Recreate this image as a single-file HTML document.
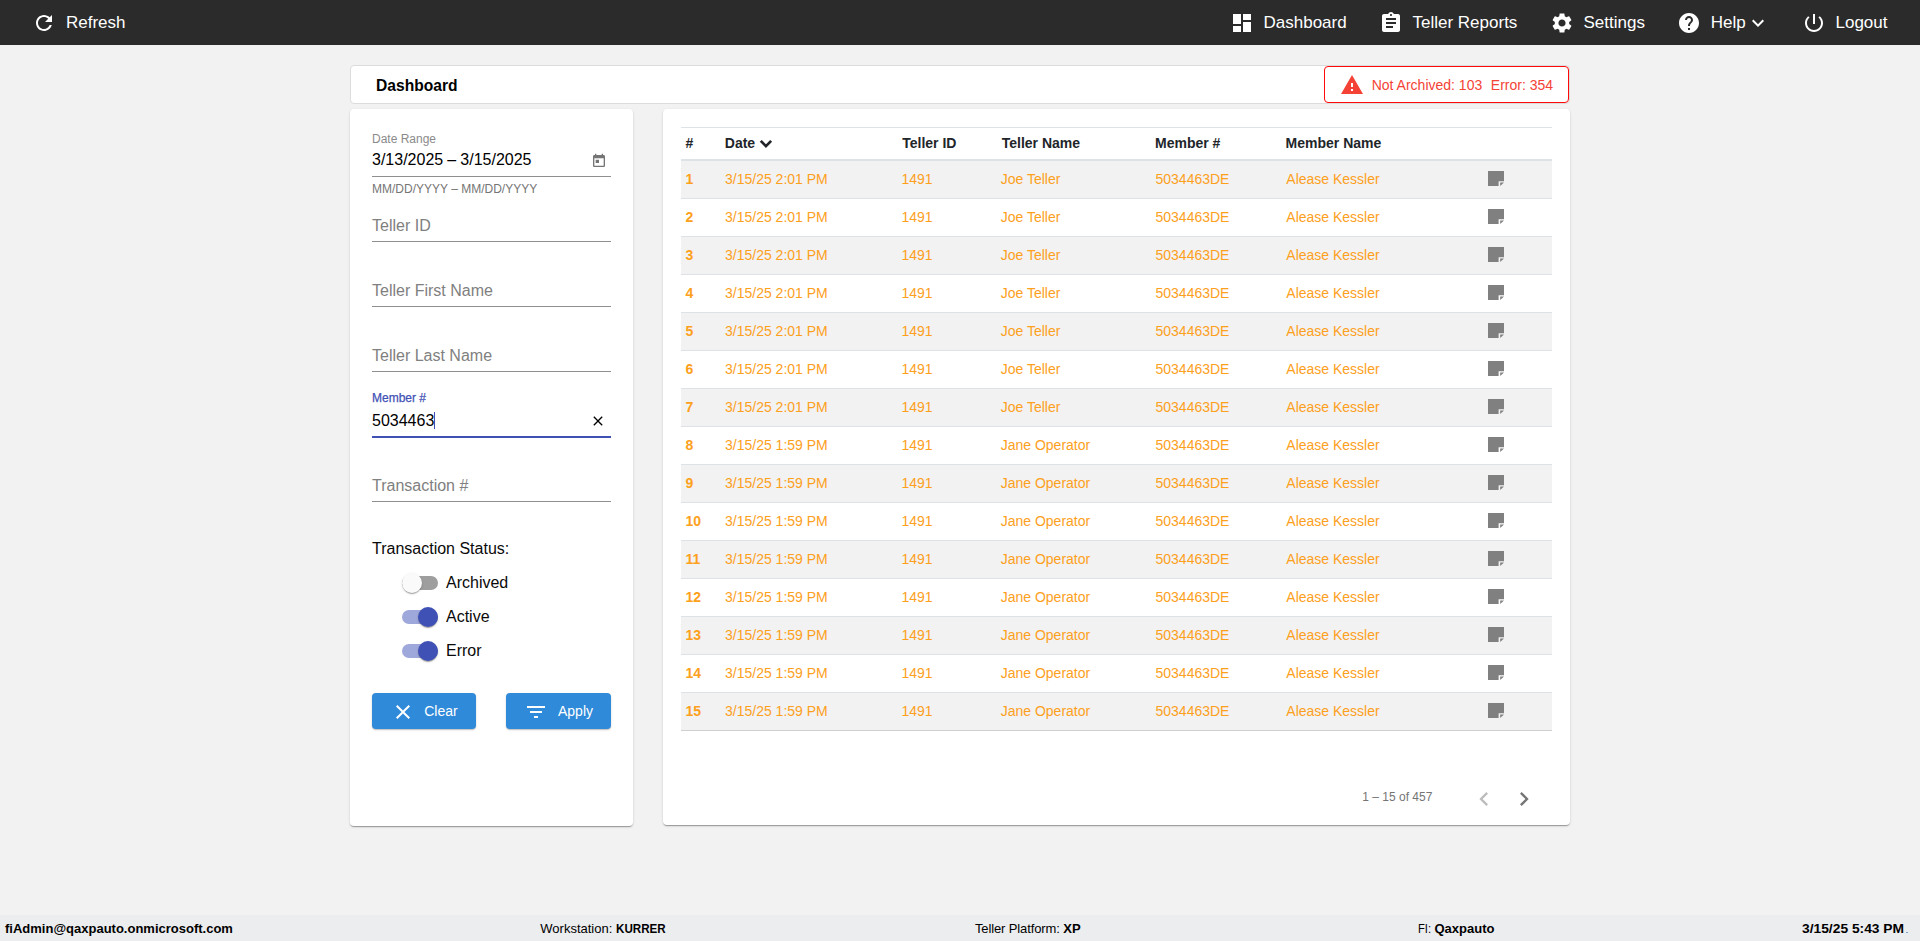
<!DOCTYPE html>
<html lang="en"><head><meta charset="utf-8"><title>Dashboard</title>
<style>
*{box-sizing:border-box;margin:0;padding:0}
html,body{width:1920px;height:941px;overflow:hidden}
body{background:#f2f2f2;font-family:"Liberation Sans",Arial,Helvetica,sans-serif;position:relative;color:#000}
.t{position:absolute;white-space:pre}
.ic{position:absolute;display:block}
.abs{position:absolute}
#nav{position:absolute;left:0;top:0;width:1920px;height:45px;background:#2b2b2b}
#titlebar{position:absolute;left:350px;top:65px;width:1220px;height:39px;background:#fff;border:1px solid #dcdcdc;border-radius:4px}
#alert{position:absolute;left:1324px;top:66px;width:245px;height:37px;border:1px solid #ff0a0a;border-radius:4px;background:#fff}
.card{position:absolute;background:#fff;border-radius:4px;box-shadow:0 2px 1px -1px rgba(0,0,0,.2),0 1px 1px 0 rgba(0,0,0,.14),0 1px 3px 0 rgba(0,0,0,.12)}
.ul{position:absolute;left:372px;width:239px;height:1px;background:#8f8f8f}
.track{position:absolute;left:402px;width:36px;height:14px;border-radius:8px}
.thumb{position:absolute;width:20px;height:20px;border-radius:50%;box-shadow:0 2px 1px -1px rgba(0,0,0,.2),0 1px 1px 0 rgba(0,0,0,.14),0 1px 3px 0 rgba(0,0,0,.12)}
.btn{position:absolute;top:693px;height:36px;background:#2f8ad9;border-radius:4px;box-shadow:0 1px 1px 0 rgba(0,0,0,.18),0 1px 3px 0 rgba(0,0,0,.10)}
.row{position:absolute;left:681px;width:871px;height:38px;border-bottom:1px solid #dee2e6}
.row.odd{background:#f2f2f2}
.c{color:#fda01c}
#footer{position:absolute;left:0;top:915px;width:1920px;height:26px;background:#ecedef}
</style></head><body>

<div id="nav">
<svg class="ic" style="left:32px;top:10.8px;width:24px;height:24px;" viewBox="0 0 24 24"><path fill="#fff" d="M17.65 6.35C16.2 4.9 14.21 4 12 4c-4.42 0-7.99 3.58-7.99 8s3.57 8 7.99 8c3.73 0 6.84-2.55 7.73-6h-2.08c-.82 2.33-3.04 4-5.65 4-3.31 0-6-2.69-6-6s2.69-6 6-6c1.66 0 3.14.69 4.22 1.78L13 11h7V4l-2.35 2.35z"/></svg>
<div class="t" style="left:66px;top:13.00px;font-size:17px;line-height:19px;color:#fff;">Refresh</div>
<svg class="ic" style="left:1229.5px;top:10.8px;width:24px;height:24px;" viewBox="0 0 24 24"><path fill="#fff" d="M3 13h8V3H3v10zm0 8h8v-6H3v6zm10 0h8V11h-8v10zm0-18v6h8V3h-8z"/></svg>
<div class="t" style="left:1263.5px;top:13.00px;font-size:17px;line-height:19px;color:#fff;">Dashboard</div>
<svg class="ic" style="left:1378.5px;top:10.8px;width:24px;height:24px;" viewBox="0 0 24 24"><path fill="#fff" d="M19 3h-4.18C14.4 1.84 13.3 1 12 1c-1.3 0-2.4.84-2.82 2H5c-1.1 0-2 .9-2 2v14c0 1.1.9 2 2 2h14c1.1 0 2-.9 2-2V5c0-1.1-.9-2-2-2zm-7 0c.55 0 1 .45 1 1s-.45 1-1 1-1-.45-1-1 .45-1 1-1zm2 14H7v-2h7v2zm3-4H7v-2h10v2zm0-4H7V7h10v2z"/></svg>
<div class="t" style="left:1412.5px;top:13.00px;font-size:17px;line-height:19px;color:#fff;">Teller Reports</div>
<svg class="ic" style="left:1549.5px;top:10.8px;width:24px;height:24px;" viewBox="0 0 24 24"><path fill="#fff" d="M19.14,12.94c0.04-0.3,0.06-0.61,0.06-0.94c0-0.32-0.02-0.64-0.07-0.94l2.03-1.58c0.18-0.14,0.23-0.41,0.12-0.61 l-1.92-3.32c-0.12-0.22-0.37-0.29-0.59-0.22l-2.39,0.96c-0.5-0.38-1.03-0.7-1.62-0.94L14.4,2.81c-0.04-0.24-0.24-0.41-0.48-0.41 h-3.84c-0.24,0-0.43,0.17-0.47,0.41L9.25,5.35C8.66,5.59,8.12,5.92,7.63,6.29L5.24,5.33c-0.22-0.08-0.47,0-0.59,0.22L2.74,8.87 C2.62,9.08,2.66,9.34,2.86,9.48l2.03,1.58C4.84,11.36,4.8,11.69,4.8,12s0.02,0.64,0.07,0.94l-2.03,1.58 c-0.18,0.14-0.23,0.41-0.12,0.61l1.92,3.32c0.12,0.22,0.37,0.29,0.59,0.22l2.39-0.96c0.5,0.38,1.03,0.7,1.62,0.94l0.36,2.54 c0.05,0.24,0.24,0.41,0.48,0.41h3.84c0.24,0,0.44-0.17,0.47-0.41l0.36-2.54c0.59-0.24,1.13-0.56,1.62-0.94l2.39,0.96 c0.22,0.08,0.47,0,0.59-0.22l1.92-3.32c0.12-0.22,0.07-0.47-0.12-0.61L19.14,12.94z M12,15.6c-1.98,0-3.6-1.62-3.6-3.6 s1.62-3.6,3.6-3.6s3.6,1.62,3.6,3.6S13.98,15.6,12,15.6z"/></svg>
<div class="t" style="left:1583.5px;top:13.00px;font-size:17px;line-height:19px;color:#fff;">Settings</div>
<svg class="ic" style="left:1676.7px;top:10.8px;width:24px;height:24px;" viewBox="0 0 24 24"><path fill="#fff" d="M12 2C6.48 2 2 6.48 2 12s4.48 10 10 10 10-4.48 10-10S17.52 2 12 2zm1 17h-2v-2h2v2zm2.07-7.75l-.9.92C13.45 12.9 13 13.5 13 15h-2v-.5c0-1.1.45-2.1 1.17-2.83l1.24-1.26c.37-.36.59-.86.59-1.41 0-1.1-.9-2-2-2s-2 .9-2 2H8c0-2.21 1.79-4 4-4s4 1.79 4 4c0 .88-.36 1.68-.93 2.25z"/></svg>
<div class="t" style="left:1710.7px;top:13.00px;font-size:17px;line-height:19px;color:#fff;">Help</div>
<svg class="ic" style="left:1746px;top:10.8px;width:24px;height:24px;" viewBox="0 0 24 24"><path fill="#fff" d="M16.59 8.59L12 13.17 7.41 8.59 6 10l6 6 6-6z"/></svg>
<svg class="ic" style="left:1801.7px;top:10.8px;width:24px;height:24px;" viewBox="0 0 24 24"><path fill="#fff" d="M13 3h-2v10h2V3zm4.83 2.17l-1.42 1.42C17.99 7.86 19 9.81 19 12c0 3.87-3.13 7-7 7s-7-3.13-7-7c0-2.19 1.01-4.14 2.58-5.42L6.17 5.17C4.23 6.82 3 9.26 3 12c0 4.97 4.03 9 9 9s9-4.03 9-9c0-2.74-1.23-5.18-3.17-6.83z"/></svg>
<div class="t" style="left:1835.5px;top:13.00px;font-size:17px;line-height:19px;color:#fff;">Logout</div>
</div>
<div id="titlebar"></div>
<div class="t" style="left:376.1px;top:77.00px;font-size:15.6px;line-height:17px;color:#000;font-weight:700;">Dashboard</div>
<div id="alert"></div>
<svg class="ic" style="left:1340.4px;top:73.1px;width:24px;height:24px;" viewBox="0 0 24 24"><path fill="#f44336" d="M1 21h22L12 2 1 21zm12-3h-2v-2h2v2zm0-4h-2v-4h2v4z"/></svg>
<div class="t" style="left:1371.7px;top:77.00px;font-size:14px;line-height:16px;color:#f44336;">Not Archived: 103</div>
<div class="t" style="left:1490.8px;top:77.00px;font-size:14px;line-height:16px;color:#f44336;">Error: 354</div>
<div class="card" style="left:350px;top:109px;width:283px;height:717px"></div>
<div class="t" style="left:372px;top:132.00px;font-size:12px;line-height:14px;color:#8a8a8a;">Date Range</div>
<div class="t" style="left:372px;top:151.00px;font-size:16px;line-height:17px;color:#000;">3/13/2025</div>
<div class="t" style="left:447.2px;top:151.00px;font-size:16px;line-height:17px;color:#000;">–</div>
<div class="t" style="left:460.3px;top:151.00px;font-size:16px;line-height:17px;color:#000;">3/15/2025</div>
<svg class="ic" style="left:591.1px;top:153.1px;width:16px;height:16px;" viewBox="0 0 24 24"><path fill="#757575" d="M19 3h-1V1h-2v2H8V1H6v2H5c-1.11 0-1.99.9-1.99 2L3 19c0 1.1.89 2 2 2h14c1.1 0 2-.9 2-2V5c0-1.1-.9-2-2-2zm0 16H5V8h14v11zM7 10h5v5H7z"/></svg>
<div class="ul" style="top:176px"></div>
<div class="t" style="left:372px;top:182.00px;font-size:12px;line-height:14px;color:#757575;">MM/DD/YYYY – MM/DD/YYYY</div>
<div class="t" style="left:372px;top:217.00px;font-size:16px;line-height:17px;color:#808080;">Teller ID</div>
<div class="ul" style="top:241px"></div>
<div class="t" style="left:372px;top:282.00px;font-size:16px;line-height:17px;color:#808080;">Teller First Name</div>
<div class="ul" style="top:306px"></div>
<div class="t" style="left:372px;top:347.00px;font-size:16px;line-height:17px;color:#808080;">Teller Last Name</div>
<div class="ul" style="top:371px"></div>
<div class="t" style="left:372px;top:391.00px;font-size:12px;line-height:14px;color:#3f51b5;-webkit-text-stroke:.25px #3f51b5;">Member #</div>
<div class="t" style="left:372px;top:412.00px;font-size:16px;line-height:17px;color:#000;">5034463</div>
<div class="abs" style="left:434px;top:412px;width:1px;height:17px;background:#3f51b5"></div>
<svg class="ic" style="left:590.1px;top:413px;width:16px;height:16px;" viewBox="0 0 24 24"><path fill="#000" d="M19 6.41L17.59 5 12 10.59 6.41 5 5 6.41 10.59 12 5 17.59 6.41 19 12 13.41 17.59 19 19 17.59 13.41 12z"/></svg>
<div class="ul" style="top:436px;height:2px;background:#3f51b5"></div>
<div class="t" style="left:372px;top:477.00px;font-size:16px;line-height:17px;color:#808080;">Transaction #</div>
<div class="ul" style="top:501px"></div>
<div class="t" style="left:372px;top:540.00px;font-size:16px;line-height:17px;color:#0a0a0a;">Transaction Status:</div>
<div class="track" style="top:576px;background:#9e9e9e"></div>
<div class="thumb" style="left:402px;top:573px;background:#fafafa"></div>
<div class="t" style="left:446px;top:574.00px;font-size:16px;line-height:17px;color:#0a0a0a;">Archived</div>
<div class="track" style="top:610px;background:#9fa8da"></div>
<div class="thumb" style="left:418px;top:607px;background:#3f51b5"></div>
<div class="t" style="left:446px;top:608.00px;font-size:16px;line-height:17px;color:#0a0a0a;">Active</div>
<div class="track" style="top:644px;background:#9fa8da"></div>
<div class="thumb" style="left:418px;top:641px;background:#3f51b5"></div>
<div class="t" style="left:446px;top:642.00px;font-size:16px;line-height:17px;color:#0a0a0a;">Error</div>
<div class="btn" style="left:372px;width:104px"></div>
<svg class="ic" style="left:390.7px;top:700px;width:24px;height:24px;" viewBox="0 0 24 24"><path fill="#fff" d="M19 6.41L17.59 5 12 10.59 6.41 5 5 6.41 10.59 12 5 17.59 6.41 19 12 13.41 17.59 19 19 17.59 13.41 12z"/></svg>
<div class="t" style="left:424.2px;top:703.00px;font-size:14px;line-height:16px;color:#fff;">Clear</div>
<div class="btn" style="left:506px;width:105px"></div>
<svg class="ic" style="left:524px;top:700px;width:24px;height:24px;" viewBox="0 0 24 24"><path fill="#fff" d="M10 18h4v-2h-4v2zM3 6v2h18V6H3zm3 7h12v-2H6v2z"/></svg>
<div class="t" style="left:558px;top:703.00px;font-size:14px;line-height:16px;color:#fff;">Apply</div>
<div class="card" style="left:663px;top:109px;width:907px;height:716px"></div>
<div class="abs" style="left:681px;top:127px;width:871px;height:1px;background:#dee2e6"></div>
<div class="abs" style="left:681px;top:159px;width:871px;height:2px;background:#dee2e6"></div>
<div class="t" style="left:685.6px;top:135.00px;font-size:14px;line-height:16px;color:#212529;font-weight:700;">#</div>
<div class="t" style="left:724.8px;top:135.00px;font-size:14px;line-height:16px;color:#212529;font-weight:700;">Date</div>
<svg class="ic" style="left:758px;top:137px;width:16px;height:14px" viewBox="0 0 16 14"><polyline points="2.75,3.85 7.95,9.15 13.15,3.85" fill="none" stroke="#212529" stroke-width="2.7"/></svg>
<div class="t" style="left:902.2px;top:135.00px;font-size:14px;line-height:16px;color:#212529;font-weight:700;">Teller ID</div>
<div class="t" style="left:1001.6999999999999px;top:135.00px;font-size:14px;line-height:16px;color:#212529;font-weight:700;">Teller Name</div>
<div class="t" style="left:1155px;top:135.00px;font-size:14px;line-height:16px;color:#212529;font-weight:700;">Member #</div>
<div class="t" style="left:1285.6px;top:135.00px;font-size:14px;line-height:16px;color:#212529;font-weight:700;">Member Name</div>
<div class="row odd" style="top:161px">
<div class="t c" style="left:4.5px;top:10px;font-size:14px;line-height:16px;font-weight:700;">1</div>
<div class="t c" style="left:44.0px;top:10px;font-size:14px;line-height:16px;">3/15/25 2:01 PM</div>
<div class="t c" style="left:220.5px;top:10px;font-size:14px;line-height:16px;">1491</div>
<div class="t c" style="left:319.7px;top:10px;font-size:14px;line-height:16px;">Joe Teller</div>
<div class="t c" style="left:474.5px;top:10px;font-size:14px;line-height:16px;">5034463DE</div>
<div class="t c" style="left:605.3px;top:10px;font-size:14px;line-height:16px;">Alease Kessler</div>
<svg class="ic" style="left:807px;top:10px;width:16px;height:15px" viewBox="0 0 16 15"><path fill="#808080" d="M0 0h16v10.2h-5.4v4.8H0z"/><path fill="#808080" d="M12.2 11.6h3.8l-3.8 3.4z"/></svg>
</div>
<div class="row" style="top:199px">
<div class="t c" style="left:4.5px;top:10px;font-size:14px;line-height:16px;font-weight:700;">2</div>
<div class="t c" style="left:44.0px;top:10px;font-size:14px;line-height:16px;">3/15/25 2:01 PM</div>
<div class="t c" style="left:220.5px;top:10px;font-size:14px;line-height:16px;">1491</div>
<div class="t c" style="left:319.7px;top:10px;font-size:14px;line-height:16px;">Joe Teller</div>
<div class="t c" style="left:474.5px;top:10px;font-size:14px;line-height:16px;">5034463DE</div>
<div class="t c" style="left:605.3px;top:10px;font-size:14px;line-height:16px;">Alease Kessler</div>
<svg class="ic" style="left:807px;top:10px;width:16px;height:15px" viewBox="0 0 16 15"><path fill="#808080" d="M0 0h16v10.2h-5.4v4.8H0z"/><path fill="#808080" d="M12.2 11.6h3.8l-3.8 3.4z"/></svg>
</div>
<div class="row odd" style="top:237px">
<div class="t c" style="left:4.5px;top:10px;font-size:14px;line-height:16px;font-weight:700;">3</div>
<div class="t c" style="left:44.0px;top:10px;font-size:14px;line-height:16px;">3/15/25 2:01 PM</div>
<div class="t c" style="left:220.5px;top:10px;font-size:14px;line-height:16px;">1491</div>
<div class="t c" style="left:319.7px;top:10px;font-size:14px;line-height:16px;">Joe Teller</div>
<div class="t c" style="left:474.5px;top:10px;font-size:14px;line-height:16px;">5034463DE</div>
<div class="t c" style="left:605.3px;top:10px;font-size:14px;line-height:16px;">Alease Kessler</div>
<svg class="ic" style="left:807px;top:10px;width:16px;height:15px" viewBox="0 0 16 15"><path fill="#808080" d="M0 0h16v10.2h-5.4v4.8H0z"/><path fill="#808080" d="M12.2 11.6h3.8l-3.8 3.4z"/></svg>
</div>
<div class="row" style="top:275px">
<div class="t c" style="left:4.5px;top:10px;font-size:14px;line-height:16px;font-weight:700;">4</div>
<div class="t c" style="left:44.0px;top:10px;font-size:14px;line-height:16px;">3/15/25 2:01 PM</div>
<div class="t c" style="left:220.5px;top:10px;font-size:14px;line-height:16px;">1491</div>
<div class="t c" style="left:319.7px;top:10px;font-size:14px;line-height:16px;">Joe Teller</div>
<div class="t c" style="left:474.5px;top:10px;font-size:14px;line-height:16px;">5034463DE</div>
<div class="t c" style="left:605.3px;top:10px;font-size:14px;line-height:16px;">Alease Kessler</div>
<svg class="ic" style="left:807px;top:10px;width:16px;height:15px" viewBox="0 0 16 15"><path fill="#808080" d="M0 0h16v10.2h-5.4v4.8H0z"/><path fill="#808080" d="M12.2 11.6h3.8l-3.8 3.4z"/></svg>
</div>
<div class="row odd" style="top:313px">
<div class="t c" style="left:4.5px;top:10px;font-size:14px;line-height:16px;font-weight:700;">5</div>
<div class="t c" style="left:44.0px;top:10px;font-size:14px;line-height:16px;">3/15/25 2:01 PM</div>
<div class="t c" style="left:220.5px;top:10px;font-size:14px;line-height:16px;">1491</div>
<div class="t c" style="left:319.7px;top:10px;font-size:14px;line-height:16px;">Joe Teller</div>
<div class="t c" style="left:474.5px;top:10px;font-size:14px;line-height:16px;">5034463DE</div>
<div class="t c" style="left:605.3px;top:10px;font-size:14px;line-height:16px;">Alease Kessler</div>
<svg class="ic" style="left:807px;top:10px;width:16px;height:15px" viewBox="0 0 16 15"><path fill="#808080" d="M0 0h16v10.2h-5.4v4.8H0z"/><path fill="#808080" d="M12.2 11.6h3.8l-3.8 3.4z"/></svg>
</div>
<div class="row" style="top:351px">
<div class="t c" style="left:4.5px;top:10px;font-size:14px;line-height:16px;font-weight:700;">6</div>
<div class="t c" style="left:44.0px;top:10px;font-size:14px;line-height:16px;">3/15/25 2:01 PM</div>
<div class="t c" style="left:220.5px;top:10px;font-size:14px;line-height:16px;">1491</div>
<div class="t c" style="left:319.7px;top:10px;font-size:14px;line-height:16px;">Joe Teller</div>
<div class="t c" style="left:474.5px;top:10px;font-size:14px;line-height:16px;">5034463DE</div>
<div class="t c" style="left:605.3px;top:10px;font-size:14px;line-height:16px;">Alease Kessler</div>
<svg class="ic" style="left:807px;top:10px;width:16px;height:15px" viewBox="0 0 16 15"><path fill="#808080" d="M0 0h16v10.2h-5.4v4.8H0z"/><path fill="#808080" d="M12.2 11.6h3.8l-3.8 3.4z"/></svg>
</div>
<div class="row odd" style="top:389px">
<div class="t c" style="left:4.5px;top:10px;font-size:14px;line-height:16px;font-weight:700;">7</div>
<div class="t c" style="left:44.0px;top:10px;font-size:14px;line-height:16px;">3/15/25 2:01 PM</div>
<div class="t c" style="left:220.5px;top:10px;font-size:14px;line-height:16px;">1491</div>
<div class="t c" style="left:319.7px;top:10px;font-size:14px;line-height:16px;">Joe Teller</div>
<div class="t c" style="left:474.5px;top:10px;font-size:14px;line-height:16px;">5034463DE</div>
<div class="t c" style="left:605.3px;top:10px;font-size:14px;line-height:16px;">Alease Kessler</div>
<svg class="ic" style="left:807px;top:10px;width:16px;height:15px" viewBox="0 0 16 15"><path fill="#808080" d="M0 0h16v10.2h-5.4v4.8H0z"/><path fill="#808080" d="M12.2 11.6h3.8l-3.8 3.4z"/></svg>
</div>
<div class="row" style="top:427px">
<div class="t c" style="left:4.5px;top:10px;font-size:14px;line-height:16px;font-weight:700;">8</div>
<div class="t c" style="left:44.0px;top:10px;font-size:14px;line-height:16px;">3/15/25 1:59 PM</div>
<div class="t c" style="left:220.5px;top:10px;font-size:14px;line-height:16px;">1491</div>
<div class="t c" style="left:319.7px;top:10px;font-size:14px;line-height:16px;">Jane Operator</div>
<div class="t c" style="left:474.5px;top:10px;font-size:14px;line-height:16px;">5034463DE</div>
<div class="t c" style="left:605.3px;top:10px;font-size:14px;line-height:16px;">Alease Kessler</div>
<svg class="ic" style="left:807px;top:10px;width:16px;height:15px" viewBox="0 0 16 15"><path fill="#808080" d="M0 0h16v10.2h-5.4v4.8H0z"/><path fill="#808080" d="M12.2 11.6h3.8l-3.8 3.4z"/></svg>
</div>
<div class="row odd" style="top:465px">
<div class="t c" style="left:4.5px;top:10px;font-size:14px;line-height:16px;font-weight:700;">9</div>
<div class="t c" style="left:44.0px;top:10px;font-size:14px;line-height:16px;">3/15/25 1:59 PM</div>
<div class="t c" style="left:220.5px;top:10px;font-size:14px;line-height:16px;">1491</div>
<div class="t c" style="left:319.7px;top:10px;font-size:14px;line-height:16px;">Jane Operator</div>
<div class="t c" style="left:474.5px;top:10px;font-size:14px;line-height:16px;">5034463DE</div>
<div class="t c" style="left:605.3px;top:10px;font-size:14px;line-height:16px;">Alease Kessler</div>
<svg class="ic" style="left:807px;top:10px;width:16px;height:15px" viewBox="0 0 16 15"><path fill="#808080" d="M0 0h16v10.2h-5.4v4.8H0z"/><path fill="#808080" d="M12.2 11.6h3.8l-3.8 3.4z"/></svg>
</div>
<div class="row" style="top:503px">
<div class="t c" style="left:4.5px;top:10px;font-size:14px;line-height:16px;font-weight:700;">10</div>
<div class="t c" style="left:44.0px;top:10px;font-size:14px;line-height:16px;">3/15/25 1:59 PM</div>
<div class="t c" style="left:220.5px;top:10px;font-size:14px;line-height:16px;">1491</div>
<div class="t c" style="left:319.7px;top:10px;font-size:14px;line-height:16px;">Jane Operator</div>
<div class="t c" style="left:474.5px;top:10px;font-size:14px;line-height:16px;">5034463DE</div>
<div class="t c" style="left:605.3px;top:10px;font-size:14px;line-height:16px;">Alease Kessler</div>
<svg class="ic" style="left:807px;top:10px;width:16px;height:15px" viewBox="0 0 16 15"><path fill="#808080" d="M0 0h16v10.2h-5.4v4.8H0z"/><path fill="#808080" d="M12.2 11.6h3.8l-3.8 3.4z"/></svg>
</div>
<div class="row odd" style="top:541px">
<div class="t c" style="left:4.5px;top:10px;font-size:14px;line-height:16px;font-weight:700;">11</div>
<div class="t c" style="left:44.0px;top:10px;font-size:14px;line-height:16px;">3/15/25 1:59 PM</div>
<div class="t c" style="left:220.5px;top:10px;font-size:14px;line-height:16px;">1491</div>
<div class="t c" style="left:319.7px;top:10px;font-size:14px;line-height:16px;">Jane Operator</div>
<div class="t c" style="left:474.5px;top:10px;font-size:14px;line-height:16px;">5034463DE</div>
<div class="t c" style="left:605.3px;top:10px;font-size:14px;line-height:16px;">Alease Kessler</div>
<svg class="ic" style="left:807px;top:10px;width:16px;height:15px" viewBox="0 0 16 15"><path fill="#808080" d="M0 0h16v10.2h-5.4v4.8H0z"/><path fill="#808080" d="M12.2 11.6h3.8l-3.8 3.4z"/></svg>
</div>
<div class="row" style="top:579px">
<div class="t c" style="left:4.5px;top:10px;font-size:14px;line-height:16px;font-weight:700;">12</div>
<div class="t c" style="left:44.0px;top:10px;font-size:14px;line-height:16px;">3/15/25 1:59 PM</div>
<div class="t c" style="left:220.5px;top:10px;font-size:14px;line-height:16px;">1491</div>
<div class="t c" style="left:319.7px;top:10px;font-size:14px;line-height:16px;">Jane Operator</div>
<div class="t c" style="left:474.5px;top:10px;font-size:14px;line-height:16px;">5034463DE</div>
<div class="t c" style="left:605.3px;top:10px;font-size:14px;line-height:16px;">Alease Kessler</div>
<svg class="ic" style="left:807px;top:10px;width:16px;height:15px" viewBox="0 0 16 15"><path fill="#808080" d="M0 0h16v10.2h-5.4v4.8H0z"/><path fill="#808080" d="M12.2 11.6h3.8l-3.8 3.4z"/></svg>
</div>
<div class="row odd" style="top:617px">
<div class="t c" style="left:4.5px;top:10px;font-size:14px;line-height:16px;font-weight:700;">13</div>
<div class="t c" style="left:44.0px;top:10px;font-size:14px;line-height:16px;">3/15/25 1:59 PM</div>
<div class="t c" style="left:220.5px;top:10px;font-size:14px;line-height:16px;">1491</div>
<div class="t c" style="left:319.7px;top:10px;font-size:14px;line-height:16px;">Jane Operator</div>
<div class="t c" style="left:474.5px;top:10px;font-size:14px;line-height:16px;">5034463DE</div>
<div class="t c" style="left:605.3px;top:10px;font-size:14px;line-height:16px;">Alease Kessler</div>
<svg class="ic" style="left:807px;top:10px;width:16px;height:15px" viewBox="0 0 16 15"><path fill="#808080" d="M0 0h16v10.2h-5.4v4.8H0z"/><path fill="#808080" d="M12.2 11.6h3.8l-3.8 3.4z"/></svg>
</div>
<div class="row" style="top:655px">
<div class="t c" style="left:4.5px;top:10px;font-size:14px;line-height:16px;font-weight:700;">14</div>
<div class="t c" style="left:44.0px;top:10px;font-size:14px;line-height:16px;">3/15/25 1:59 PM</div>
<div class="t c" style="left:220.5px;top:10px;font-size:14px;line-height:16px;">1491</div>
<div class="t c" style="left:319.7px;top:10px;font-size:14px;line-height:16px;">Jane Operator</div>
<div class="t c" style="left:474.5px;top:10px;font-size:14px;line-height:16px;">5034463DE</div>
<div class="t c" style="left:605.3px;top:10px;font-size:14px;line-height:16px;">Alease Kessler</div>
<svg class="ic" style="left:807px;top:10px;width:16px;height:15px" viewBox="0 0 16 15"><path fill="#808080" d="M0 0h16v10.2h-5.4v4.8H0z"/><path fill="#808080" d="M12.2 11.6h3.8l-3.8 3.4z"/></svg>
</div>
<div class="row odd" style="top:693px;border-bottom-color:#cfd0d2">
<div class="t c" style="left:4.5px;top:10px;font-size:14px;line-height:16px;font-weight:700;">15</div>
<div class="t c" style="left:44.0px;top:10px;font-size:14px;line-height:16px;">3/15/25 1:59 PM</div>
<div class="t c" style="left:220.5px;top:10px;font-size:14px;line-height:16px;">1491</div>
<div class="t c" style="left:319.7px;top:10px;font-size:14px;line-height:16px;">Jane Operator</div>
<div class="t c" style="left:474.5px;top:10px;font-size:14px;line-height:16px;">5034463DE</div>
<div class="t c" style="left:605.3px;top:10px;font-size:14px;line-height:16px;">Alease Kessler</div>
<svg class="ic" style="left:807px;top:10px;width:16px;height:15px" viewBox="0 0 16 15"><path fill="#808080" d="M0 0h16v10.2h-5.4v4.8H0z"/><path fill="#808080" d="M12.2 11.6h3.8l-3.8 3.4z"/></svg>
</div>
<div class="t" style="left:1362.3px;top:790.00px;font-size:12px;line-height:14px;color:#757575;">1 – 15 of 457</div>
<svg class="ic" style="left:1470.1px;top:784.7px;width:28px;height:28px;" viewBox="0 0 24 24"><path fill="#bdbdbd" d="M15.41 7.41L14 6l-6 6 6 6 1.41-1.41L10.83 12z"/></svg>
<svg class="ic" style="left:1510px;top:784.7px;width:28px;height:28px;" viewBox="0 0 24 24"><path fill="#757575" d="M10 6L8.59 7.41 13.17 12l-4.58 4.59L10 18l6-6z"/></svg>
<div id="footer"></div>
<div class="t" style="left:5px;top:921.00px;font-size:13px;line-height:15px;color:#000;font-weight:700;">fiAdmin@qaxpauto.onmicrosoft.com</div>
<div class="t" style="left:540.3px;top:921.00px;font-size:13px;line-height:15px;color:#000;">Workstation:</div>
<div class="t" style="left:616.3px;top:921.00px;font-size:13px;line-height:15px;color:#000;font-weight:700;transform:scaleX(.895);transform-origin:0 0;">KURRER</div>
<div class="t" style="left:975px;top:921.00px;font-size:13px;line-height:15px;color:#000;letter-spacing:-.13px;">Teller Platform:</div>
<div class="t" style="left:1063.3px;top:921.00px;font-size:13px;line-height:15px;color:#000;font-weight:700;">XP</div>
<div class="t" style="left:1417.6px;top:921.00px;font-size:13px;line-height:15px;color:#000;transform:scaleX(.86);transform-origin:0 0;">FI:</div>
<div class="t" style="left:1434.5px;top:921.00px;font-size:13px;line-height:15px;color:#000;font-weight:700;">Qaxpauto</div>
<div class="t" style="left:1802px;top:921.00px;font-size:13px;line-height:15px;color:#000;font-weight:700;transform:scaleX(1.062);transform-origin:0 0;">3/15/25 5:43 PM</div>
<div class="abs" style="left:1906px;top:932px;width:2px;height:1px;background:#7da3cf"></div>
</body></html>
